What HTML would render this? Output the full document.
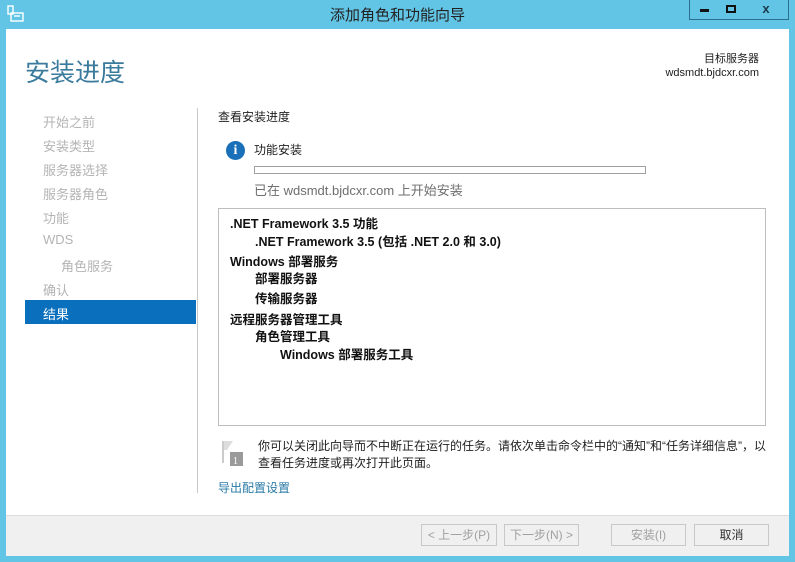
<!DOCTYPE html>
<html><head><meta charset="utf-8"><style>
*{margin:0;padding:0;box-sizing:border-box}
body{width:795px;height:562px;overflow:hidden;background:#62c5e6;font-family:"Liberation Sans","Noto Sans CJK SC",sans-serif;position:relative;font-size:12px;color:#1e1e1e}
.abs{position:absolute}
.title{left:0;top:4px;width:795px;text-align:center;font-size:15px;color:#222}
.ctl{top:0;height:20px;border:1px solid #2a6f8c;border-top:none;background:#62c5e6}
.main{left:6px;top:29px;width:783px;height:486px;background:#fff}
.foot{left:6px;top:515px;width:783px;height:41px;background:#f0f0f0;border-top:1px solid #dcdcdc}
.nav{left:43px;color:#b4b4b4;font-size:13px}
.btn{top:524px;height:22px;border:1px solid #c8c8c8;background:#f0f0f0;color:#a0a0a0;font-size:12px;text-align:center;line-height:20px}
.f{font-weight:bold;font-size:12.5px;color:#111}
</style></head><body>
<svg class="abs" style="left:7px;top:5px" width="17" height="17" viewBox="0 0 17 17"><rect x="1" y="1" width="5" height="8" fill="none" stroke="#fff" stroke-width="1.4"/><rect x="4" y="8" width="12" height="8" fill="none" stroke="#fff" stroke-width="1.4"/><path d="M7 11h6" stroke="#fff" stroke-width="1.4"/></svg>
<div class="abs title">添加角色和功能向导</div>
<div class="abs ctl" style="left:689px;width:30px"><div class="abs" style="left:10px;top:9px;width:9px;height:3px;background:#111"></div></div>
<div class="abs ctl" style="left:718px;width:27px;border-left:none"><div class="abs" style="left:8px;top:5px;width:10px;height:8px;border:2px solid #111"></div></div>
<div class="abs ctl" style="left:744px;width:45px;border-left:none;text-align:center;font-weight:bold;font-size:13px;line-height:18px;color:#1c3a4c">x</div>
<div class="abs main"></div>
<div class="abs" style="left:25px;top:53px;font-size:25px;color:#3a7a9c">安装进度</div>
<div class="abs" style="left:600px;top:52px;width:159px;text-align:right;font-size:11px;line-height:14px">目标服务器<br>wdsmdt.bjdcxr.com</div>
<div class="abs" style="left:197px;top:108px;width:1px;height:385px;background:#c8c8c8"></div>
<div class="abs nav" style="top:112px">开始之前</div>
<div class="abs nav" style="top:136px">安装类型</div>
<div class="abs nav" style="top:160px">服务器选择</div>
<div class="abs nav" style="top:184px">服务器角色</div>
<div class="abs nav" style="top:208px">功能</div>
<div class="abs nav" style="top:232px">WDS</div>
<div class="abs nav" style="top:256px;left:61px">角色服务</div>
<div class="abs nav" style="top:280px">确认</div>
<div class="abs" style="left:25px;top:300px;width:171px;height:24px;background:#0a6fbd;color:#fff;font-size:13px;padding:4px 0 0 18px">结果</div>
<div class="abs" style="left:218px;top:108px;font-size:12px">查看安装进度</div>
<div class="abs" style="left:226px;top:141px;width:19px;height:19px;border-radius:50%;background:#1a70b8;color:#fff;text-align:center;font-weight:bold;font-family:'Liberation Serif',serif;font-size:14px;line-height:19px">i</div>
<div class="abs" style="left:254px;top:141px">功能安装</div>
<div class="abs" style="left:254px;top:166px;width:392px;height:8px;border:1px solid #a0a0a0;background:#fff"></div>
<div class="abs" style="left:254px;top:180px;font-size:13px;color:#6e6e6e">已在 wdsmdt.bjdcxr.com 上开始安装</div>
<div class="abs" style="left:218px;top:208px;width:548px;height:218px;border:1px solid #bdbdbd"></div>
<div class="abs f" style="left:230px;top:213px">.NET Framework 3.5 功能</div>
<div class="abs f" style="left:255px;top:231px">.NET Framework 3.5 (包括 .NET 2.0 和 3.0)</div>
<div class="abs f" style="left:230px;top:251px">Windows 部署服务</div>
<div class="abs f" style="left:255px;top:268px">部署服务器</div>
<div class="abs f" style="left:255px;top:288px">传输服务器</div>
<div class="abs f" style="left:230px;top:309px">远程服务器管理工具</div>
<div class="abs f" style="left:255px;top:326px">角色管理工具</div>
<div class="abs f" style="left:280px;top:344px">Windows 部署服务工具</div>
<svg class="abs" style="left:222px;top:440px" width="22" height="27"><path d="M1 1v22" stroke="#ccc" stroke-width="2"/><path d="M2 1h9l-6 9H2z" fill="#ddd"/><rect x="8" y="12" width="13" height="14" fill="#9a9a9a"/><text x="11" y="24" font-size="10" fill="#fff" font-family="Liberation Serif">1</text></svg>
<div class="abs" style="left:258px;top:438px;font-size:12px;line-height:17px">你可以关闭此向导而不中断正在运行的任务。请依次单击命令栏中的“通知”和“任务详细信息”，以<br>查看任务进度或再次打开此页面。</div>
<div class="abs" style="left:218px;top:479px;color:#2a7aa6;font-size:12px">导出配置设置</div>
<div class="abs foot"></div>
<div class="abs btn" style="left:421px;width:76px">&lt; 上一步(P)</div>
<div class="abs btn" style="left:504px;width:75px">下一步(N) &gt;</div>
<div class="abs btn" style="left:611px;width:75px">安装(I)</div>
<div class="abs btn" style="left:694px;width:75px;color:#333">取消</div>
</body></html>
